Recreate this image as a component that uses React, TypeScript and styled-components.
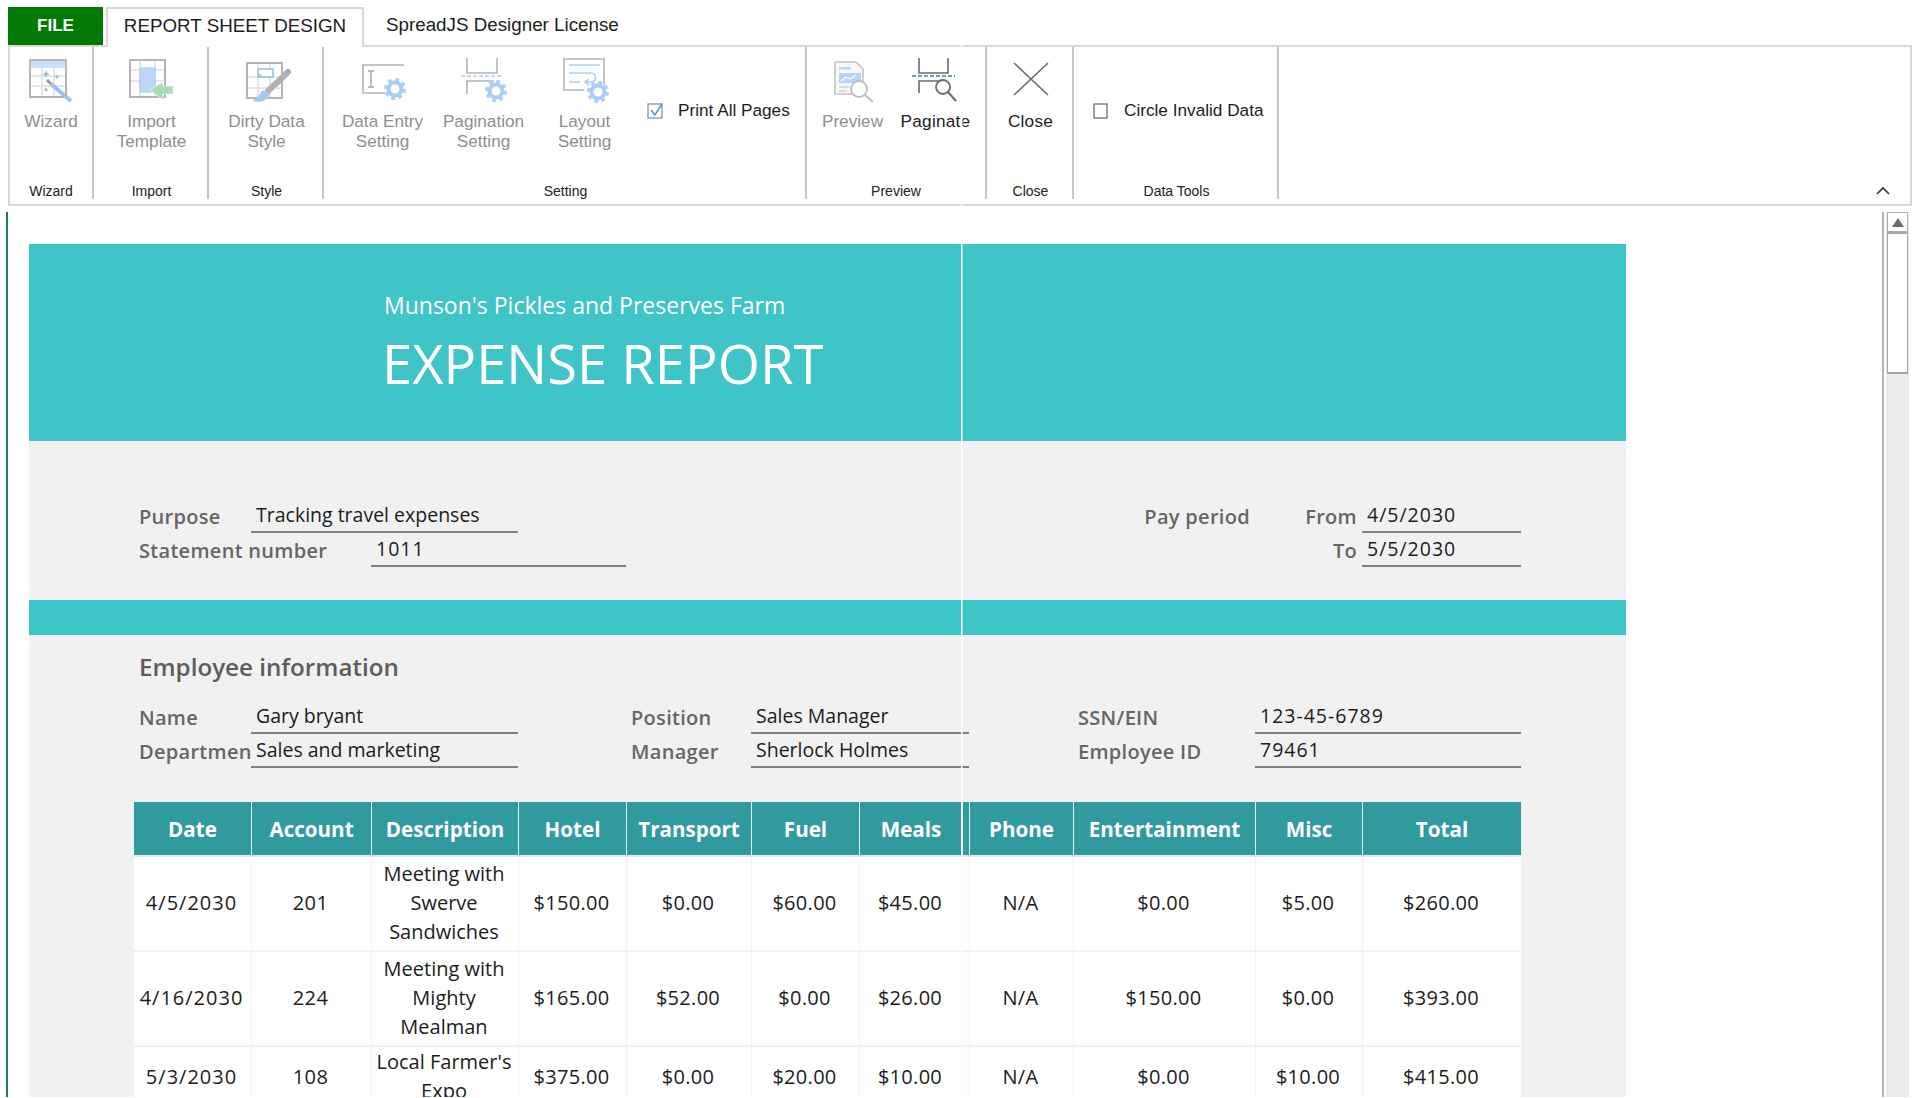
import React from "react";
import styled, { createGlobalStyle, css } from "styled-components";

const Global = createGlobalStyle`
     html, body {
          margin: 0;
          padding: 0;
          background: #fff;
          overflow: hidden;
     }
     * {
          box-sizing: border-box;
     }
`;

const GRAY = "#b5b5b5";
const BLUE = "#a9cdf5";
const sheetFont = `"Open Sans", "Noto Sans", sans-serif`;

const sheetColumns = css`
     display: grid;
     grid-template-columns: 117px 120px 147px 108px 125px 108px 103px 7px 104px 182px 107px 159px;
`;

const Gear: React.FC<{ x: number; y: number }> = ({ x, y }) => (
     <g fill="none" stroke={BLUE}>
          <circle cx={x} cy={y} r={6.5} strokeWidth={4} />
          <circle cx={x} cy={y} r={9.5} strokeWidth={3} strokeDasharray="3.7 3.76" />
     </g>
);

const Icon: React.FC<{ children: React.ReactNode }> = ({ children }) => (
     <S.IconSvg viewBox="0 0 50 46" width={50} height={46}>
          {children}
     </S.IconSvg>
);

const WizardIcon = () => (
     <Icon>
          <rect x={4} y={3} width={36} height={37} fill="#fff" stroke={GRAY} strokeWidth={2} />
          <rect x={5} y={4} width={34} height={7} fill="#c8e0fb" />
          <path d="M16 11V39M28 11V39M5 19H39M5 29H39" stroke="#dedede" strokeWidth={1.5} />
          <path d="M25 27L45 44" stroke="#9cc2ea" strokeWidth={4} />
          <path d="M21 23L25 27" stroke="#9a9a9a" strokeWidth={3} />
          <path
               d="M20 13l1 3 3 1-3 1-1 3-1-3-3-1 3-1zM31 17l.7 2 2 .7-2 .7-.7 2-.7-2-2-.7 2-.7zM20 30l2 4h-4z"
               fill="#8fb9e8"
          />
     </Icon>
);

const ImportIcon = () => (
     <Icon>
          <rect x={3} y={3} width={35} height={37} fill="#fff" stroke={GRAY} strokeWidth={2} />
          <path d="M13 4V39M28 4V39M4 13H37M4 24H37" stroke="#dedede" strokeWidth={1.5} />
          <rect x={13} y={11} width={15} height={24} fill="#bcd7f7" stroke="#a5c8f0" />
          <path d="M23 33L36 25V29H46V37H36V43Z" fill="#a8dcb9" stroke="#fff" strokeWidth={0.6} />
     </Icon>
);

const DirtyIcon = () => (
     <Icon>
          <rect x={5} y={6} width={35} height={35} fill="#fff" stroke={GRAY} strokeWidth={2} />
          <path d="M16 7V40M28 7V40M6 20H39M6 31H39" stroke="#e0e0e0" strokeWidth={1.5} />
          <rect x={16} y={12} width={15} height={8} fill="#fff" stroke="#8fbdec" strokeWidth={1.5} />
          <path d="M16 15L21 20H16Z" fill="#9ed4ad" />
          <path d="M46 15L26 34" stroke="#b0b0b0" strokeWidth={6} strokeLinecap="round" />
          <path d="M11 44C13 40 17 40 19 35C22 32 27 35 27 38C26 43 20 46 11 44Z" fill="#a6c9ef" />
     </Icon>
);

const DataEntryIcon = () => (
     <Icon>
          <path d="M46 8H5V36H27" fill="none" stroke={GRAY} strokeWidth={1.6} />
          <path d="M10 14H16M13 14V30M10 30H16" fill="none" stroke="#a8a8a8" strokeWidth={1.5} />
          <Gear x={37} y={32} />
     </Icon>
);

const PaginationIcon = () => (
     <Icon>
          <path d="M8 1V16H38V1M8 37V24H35" fill="none" stroke={GRAY} strokeWidth={1.6} />
          <path d="M2 19H44" stroke={BLUE} strokeWidth={1.5} strokeDasharray="4 2" />
          <Gear x={37} y={34} />
     </Icon>
);

const LayoutIcon = () => (
     <Icon>
          <path d="M44 28V2H4V33H24" fill="none" stroke={GRAY} strokeWidth={1.6} />
          <path
               d="M9 8H40M9 16H31C37 16 37 25 31 25H26M9 25H20M29 22L25 25L29 28"
               fill="none"
               stroke={BLUE}
               strokeWidth={1.5}
          />
          <Gear x={38} y={35} />
     </Icon>
);

const PreviewIcon = () => (
     <Icon>
          <path d="M7 5H28L35 12V28M25 37H7V5" fill="#f7f7f7" stroke="#c4c4c4" strokeWidth={1.6} />
          <rect x={11} y={10} width={12} height={2.5} fill="#bcd9f8" />
          <rect x={11} y={16} width={22} height={10} fill="#b5d3f5" />
          <path d="M13 24L18 20L22 22L28 18" fill="none" stroke="#fff" strokeWidth={1.2} />
          <path d="M11 30H21M11 34H19" stroke="#cfcfcf" strokeWidth={1.4} />
          <circle cx={31} cy={32} r={8} fill="#fff" stroke="#bdbdbd" strokeWidth={1.8} />
          <path d="M37 38L45 45" stroke="#bdbdbd" strokeWidth={2} />
     </Icon>
);

const PaginateIcon = () => (
     <Icon>
          <path d="M8 1V16H37V1M8 36V24H35" fill="none" stroke="#6b6b6b" strokeWidth={1.6} />
          <path d="M1 19H44" stroke="#2e7fd6" strokeWidth={1.6} strokeDasharray="4 2" />
          <circle cx={32} cy={30} r={7} fill="#fff" stroke="#6b6b6b" strokeWidth={1.8} />
          <path d="M37 35L45 44" stroke="#6b6b6b" strokeWidth={2} />
     </Icon>
);

const CloseIcon = () => (
     <Icon>
          <path d="M8 6L42 38M42 6L8 38" stroke="#6e6e6e" strokeWidth={1.6} />
     </Icon>
);

type RowData = {
     date: string;
     account: string;
     description: string[];
     values: (string | null)[];
     tight?: boolean;
};

const headers = [
     "Date",
     "Account",
     "Description",
     "Hotel",
     "Transport",
     "Fuel",
     "Meals",
     "",
     "Phone",
     "Entertainment",
     "Misc",
     "Total",
];

const rows: RowData[] = [
     {
          date: "4/5/2030",
          account: "201",
          description: ["Meeting with", "Swerve", "Sandwiches"],
          values: ["$150.00", "$0.00", "$60.00", "$45.00", null, "N/A", "$0.00", "$5.00", "$260.00"],
     },
     {
          date: "4/16/2030",
          account: "224",
          description: ["Meeting with", "Mighty", "Mealman"],
          values: ["$165.00", "$52.00", "$0.00", "$26.00", null, "N/A", "$150.00", "$0.00", "$393.00"],
     },
     {
          date: "5/3/2030",
          account: "108",
          description: ["Local Farmer's", "Expo"],
          values: ["$375.00", "$0.00", "$20.00", "$10.00", null, "N/A", "$0.00", "$10.00", "$415.00"],
          tight: true,
     },
];

const RibbonButton: React.FC<{ icon: React.ReactNode; lines: string[]; width: number; active?: boolean }> = (props) => (
     <S.Button $active={props.active} $width={props.width}>
          {props.icon}
          {props.lines.map((line) => (
               <span key={line}>{line}</span>
          ))}
     </S.Button>
);

export default function App() {
     return (
          <S.Frame>
               <Global />
               <S.TabBar>
                    <S.FileTab>FILE</S.FileTab>
                    <S.ActiveTab>REPORT SHEET DESIGN</S.ActiveTab>
                    <S.Tab>SpreadJS Designer License</S.Tab>
               </S.TabBar>

               <S.Ribbon>
                    <S.Group $width={84} $pad={0}>
                         <S.GroupBody>
                              <RibbonButton icon={<WizardIcon />} lines={["Wizard"]} width={80} />
                         </S.GroupBody>
                         <S.GroupLabel>Wizard</S.GroupLabel>
                    </S.Group>
                    <S.Group $width={115} $pad={2}>
                         <S.GroupBody>
                              <RibbonButton icon={<ImportIcon />} lines={["Import", "Template"]} width={101} />
                         </S.GroupBody>
                         <S.GroupLabel>Import</S.GroupLabel>
                    </S.Group>
                    <S.Group $width={115} $pad={2}>
                         <S.GroupBody>
                              <RibbonButton icon={<DirtyIcon />} lines={["Dirty Data", "Style"]} width={101} />
                         </S.GroupBody>
                         <S.GroupLabel>Style</S.GroupLabel>
                    </S.Group>
                    <S.Group $width={483} $pad={2}>
                         <S.GroupBody $inset={6}>
                              <RibbonButton icon={<DataEntryIcon />} lines={["Data Entry", "Setting"]} width={101} />
                              <RibbonButton icon={<PaginationIcon />} lines={["Pagination", "Setting"]} width={101} />
                              <RibbonButton icon={<LayoutIcon />} lines={["Layout", "Setting"]} width={101} />
                              <S.Check $gap={14} $inset={12}>
                                   <S.CheckBox viewBox="0 0 17 17" width={17} height={17}>
                                        <rect x={1} y={2} width={14} height={14} fill="#fff" stroke="#9a9a9a" strokeWidth={1.4} />
                                        <path d="M4 8L8 13L15 2" fill="none" stroke="#4a98e6" strokeWidth={1.6} />
                                   </S.CheckBox>
                                   Print All Pages
                              </S.Check>
                         </S.GroupBody>
                         <S.GroupLabel>Setting</S.GroupLabel>
                    </S.Group>
                    <S.Group $width={180} $pad={0}>
                         <S.GroupBody $inset={4}>
                              <RibbonButton icon={<PreviewIcon />} lines={["Preview"]} width={83} />
                              <RibbonButton icon={<PaginateIcon />} lines={["Paginate"]} width={83} active />
                         </S.GroupBody>
                         <S.GroupLabel>Preview</S.GroupLabel>
                    </S.Group>
                    <S.Group $width={87} $pad={2}>
                         <S.GroupBody>
                              <RibbonButton icon={<CloseIcon />} lines={["Close"]} width={83} active />
                         </S.GroupBody>
                         <S.GroupLabel>Close</S.GroupLabel>
                    </S.Group>
                    <S.Group $width={205} $pad={2}>
                         <S.GroupBody $inset={0}>
                              <S.Check $gap={16} $inset={17}>
                                   <S.CheckBox viewBox="0 0 15 17" width={15} height={17}>
                                        <rect x={1} y={2} width={13} height={14} fill="#fff" stroke="#777" strokeWidth={1.4} />
                                   </S.CheckBox>
                                   Circle Invalid Data
                              </S.Check>
                         </S.GroupBody>
                         <S.GroupLabel>Data Tools</S.GroupLabel>
                    </S.Group>
                    <S.Collapse viewBox="0 0 14 10" width={14} height={10}>
                         <path d="M1 8L7 2L13 8" fill="none" stroke="#333" strokeWidth={1.6} />
                    </S.Collapse>
               </S.Ribbon>

               <S.Workspace>
                    <S.SheetArea>
                         <S.Sheet>
                              <S.Banner>
                                   <S.Company>Munson's Pickles and Preserves Farm</S.Company>
                                   <S.ReportTitle>EXPENSE REPORT</S.ReportTitle>
                              </S.Banner>

                              <S.Section $top={58} $bottom={33}>
                                   <S.FormRow>
                                        <S.Label $col={1} $span={1}>Purpose</S.Label>
                                        <S.Value $col={2} $span={2}>Tracking travel expenses</S.Value>
                                        <S.Label $col={10} $span={1} $right>Pay period</S.Label>
                                        <S.Label $col={11} $span={1} $right>From</S.Label>
                                        <S.Value $col={12} $span={1} $spaced>4/5/2030</S.Value>
                                   </S.FormRow>
                                   <S.FormRow>
                                        <S.Label $col={1} $span={2}>Statement number</S.Label>
                                        <S.Value $col={3} $span={2} $spaced>1011</S.Value>
                                        <S.Label $col={11} $span={1} $right>To</S.Label>
                                        <S.Value $col={12} $span={1} $spaced>5/5/2030</S.Value>
                                   </S.FormRow>
                              </S.Section>

                              <S.Stripe />

                              <S.Section $top={0} $bottom={34}>
                                   <S.SectionTitle>Employee information</S.SectionTitle>
                                   <S.FormRow>
                                        <S.Label $col={1} $span={1}>Name</S.Label>
                                        <S.Value $col={2} $span={2}>Gary bryant</S.Value>
                                        <S.Label $col={5} $span={1}>Position</S.Label>
                                        <S.Value $col={6} $span={3}>Sales Manager</S.Value>
                                        <S.Label $col={10} $span={1}>SSN/EIN</S.Label>
                                        <S.Value $col={11} $span={2} $spaced>123-45-6789</S.Value>
                                   </S.FormRow>
                                   <S.FormRow>
                                        <S.Label $col={1} $span={1}>Department</S.Label>
                                        <S.Value $col={2} $span={2}>Sales and marketing</S.Value>
                                        <S.Label $col={5} $span={1}>Manager</S.Label>
                                        <S.Value $col={6} $span={3}>Sherlock Holmes</S.Value>
                                        <S.Label $col={10} $span={1}>Employee ID</S.Label>
                                        <S.Value $col={11} $span={2} $spaced>79461</S.Value>
                                   </S.FormRow>
                              </S.Section>

                              <S.TableWrap>
                                   <S.HeadRow>
                                        {headers.map((title, i) => (
                                             <S.HeadCell key={i}>{title}</S.HeadCell>
                                        ))}
                                   </S.HeadRow>
                                   {rows.map((row) => (
                                        <S.BodyRow key={row.date}>
                                             <S.Cell $spacing={1} $tight={row.tight}>{row.date}</S.Cell>
                                             <S.Cell $spacing={0.4} $tight={row.tight}>{row.account}</S.Cell>
                                             <S.Cell $spacing={0} $tight={row.tight}>
                                                  {row.description.map((line) => (
                                                       <div key={line}>{line}</div>
                                                  ))}
                                             </S.Cell>
                                             {row.values.map((value, i) => (
                                                  <S.Cell key={i} $spacing={0.3} $tight={row.tight}>{value}</S.Cell>
                                             ))}
                                        </S.BodyRow>
                                   ))}
                              </S.TableWrap>
                         </S.Sheet>
                    </S.SheetArea>
                    <S.ScrollBar>
                         <S.ScrollButton>
                              <svg viewBox="0 0 12 9" width={12} height={9}>
                                   <path d="M6 0L12 9H0Z" fill="#6a6a6a" />
                              </svg>
                         </S.ScrollButton>
                         <S.ScrollThumb />
                    </S.ScrollBar>
               </S.Workspace>

               <S.PageBreak />
          </S.Frame>
     );
}

const S = {
     Frame: styled.div`
          position: relative;
          width: 1920px;
          height: 1098px;
          overflow: hidden;
          font-family: "Liberation Sans", Arial, sans-serif;
          background: #fff;
     `,

     TabBar: styled.div`
          display: flex;
          align-items: stretch;
          height: 45px;
          padding: 7px 0 0 8px;
     `,
     FileTab: styled.div`
          width: 95px;
          margin-right: 3px;
          display: flex;
          align-items: center;
          justify-content: center;
          background: #037a03;
          color: #fff;
          font-size: 17px;
          font-weight: 700;
     `,
     ActiveTab: styled.div`
          width: 258px;
          height: 40px;
          padding-bottom: 5px;
          display: flex;
          align-items: center;
          justify-content: center;
          background: #fff;
          border: 2px solid #d8d8d8;
          border-bottom: 0;
          color: #1c1c1c;
          font-size: 18.8px;
          position: relative;
          z-index: 1;
     `,
     Tab: styled.div`
          padding: 0 0 2px 22px;
          display: flex;
          align-items: center;
          color: #1c1c1c;
          font-size: 18.8px;
     `,

     Ribbon: styled.div`
          display: flex;
          width: 1904px;
          height: 161px;
          margin-left: 8px;
          padding-bottom: 5px;
          border: 2px solid #d8d8d8;
     `,
     Group: styled.div<{ $width: number; $pad: number }>`
          width: ${(p) => p.$width}px;
          padding-left: ${(p) => p.$pad}px;
          display: flex;
          flex-direction: column;
          border-right: 2px solid #c3c7ce;
     `,
     GroupBody: styled.div<{ $inset?: number }>`
          flex: 1;
          display: flex;
          justify-content: ${(p) => (p.$inset === undefined ? "center" : "flex-start")};
          padding-left: ${(p) => p.$inset ?? 0}px;
     `,
     GroupLabel: styled.div`
          height: 16px;
          line-height: 16px;
          text-align: center;
          font-size: 14px;
          color: #222;
     `,
     Button: styled.div<{ $active?: boolean; $width: number }>`
          width: ${(p) => p.$width}px;
          flex: none;
          padding-top: 10px;
          display: flex;
          flex-direction: column;
          align-items: center;
          font-size: 17.2px;
          line-height: 20px;
          white-space: nowrap;
          letter-spacing: ${(p) => (p.$active ? "0.25px" : "0")};
          color: ${(p) => (p.$active ? "#1c1c1c" : "#8e8e8e")};
     `,
     IconSvg: styled.svg`
          display: block;
          flex: none;
          margin-bottom: 8px;
     `,
     Check: styled.div<{ $gap: number; $inset: number }>`
          display: flex;
          align-items: center;
          gap: ${(p) => p.$gap}px;
          height: 20px;
          margin: 53px 0 0 ${(p) => p.$inset}px;
          font-size: 17.2px;
          color: #1c1c1c;
          white-space: nowrap;
     `,
     CheckBox: styled.svg`
          display: block;
          flex: none;
     `,
     Collapse: styled.svg`
          align-self: flex-end;
          margin: 0 0 3px 597px;
     `,

     Workspace: styled.div`
          display: flex;
          height: 885px;
          margin: 6px 0 0 6px;
     `,
     SheetArea: styled.div`
          width: 1878px;
          padding: 32px 0 0 21px;
          overflow: hidden;
          border-left: 2px solid #1f7a5e;
          border-right: 2px solid #b4b4b4;
     `,
     Sheet: styled.div`
          width: 1597px;
          background: #f1f1f1;
          font-family: ${sheetFont};
          padding-bottom: 80px;
     `,
     Banner: styled.div`
          height: 197px;
          padding: 46px 0 0 355px;
          background: #3fc4c8;
          color: #fff;
     `,
     Company: styled.div`
          font-size: 23px;
          line-height: 30px;
     `,
     ReportTitle: styled.div`
          margin: 7px 0 0 -2px;
          font-size: 54.3px;
          line-height: 72px;
     `,
     Section: styled.div<{ $top: number; $bottom: number }>`
          padding: ${(p) => p.$top}px 0 ${(p) => p.$bottom}px 105px;
     `,
     Stripe: styled.div`
          height: 35px;
          background: #3fc4c8;
     `,
     SectionTitle: styled.div`
          height: 65px;
          display: flex;
          align-items: center;
          padding: 0 0 3px 5px;
          font-size: 24.2px;
          font-weight: 600;
          color: #5d5d5d;
     `,
     FormRow: styled.div`
          ${sheetColumns}
          height: 34px;
     `,
     Label: styled.div<{ $col: number; $span: number; $right?: boolean }>`
          grid-column: ${(p) => p.$col} / span ${(p) => p.$span};
          padding: 0 ${(p) => (p.$right ? "5px" : "0")} 0 ${(p) => (p.$right ? "0" : "5px")};
          line-height: 36px;
          overflow: hidden;
          white-space: nowrap;
          text-align: ${(p) => (p.$right ? "right" : "left")};
          font-size: 20px;
          letter-spacing: 0.3px;
          font-weight: 600;
          color: #666;
     `,
     Value: styled.div<{ $col: number; $span: number; $spaced?: boolean }>`
          grid-column: ${(p) => p.$col} / span ${(p) => p.$span};
          padding-left: 5px;
          line-height: 32px;
          border-bottom: 2px solid #808080;
          white-space: nowrap;
          font-size: 19.5px;
          letter-spacing: ${(p) => (p.$spaced ? "1px" : "0")};
          color: #1c1c1c;
     `,
     TableWrap: styled.div`
          margin-left: 105px;
          width: 1387px;
     `,
     HeadRow: styled.div`
          ${sheetColumns}
          height: 55px;
          background: #319a9f;
          border-bottom: 2px solid #e6e6e6;
     `,
     HeadCell: styled.div`
          display: flex;
          align-items: center;
          justify-content: center;
          border-left: 1px solid #e8f4f4;
          color: #fff;
          font-size: 20.6px;
          font-weight: 700;
          white-space: nowrap;
          &:first-child {
               border-left: 0;
          }
     `,
     BodyRow: styled.div`
          ${sheetColumns}
          background: #fff;
          border-bottom: 2px solid #f1f1f1;
     `,
     Cell: styled.div<{ $spacing: number; $tight?: boolean }>`
          display: flex;
          flex-direction: column;
          align-items: center;
          justify-content: center;
          padding: ${(p) => (p.$tight ? "0 2px 2px 0" : "2px 2px 4px 0")};
          border-left: 1px solid #f1f1f1;
          text-align: center;
          font-size: 20px;
          line-height: 29px;
          letter-spacing: ${(p) => p.$spacing}px;
          color: #1c1c1c;
          white-space: nowrap;
          &:first-child {
               border-left: 0;
          }
     `,

     ScrollBar: styled.div`
          width: 23px;
          margin-left: 2px;
          background: #ebebeb;
     `,
     ScrollButton: styled.div`
          width: 21px;
          height: 22px;
          margin-left: 1px;
          display: flex;
          align-items: center;
          justify-content: center;
          background: #fff;
          border: 1px solid #b0b0b0;
          border-bottom: 3px solid #aaa;
     `,
     ScrollThumb: styled.div`
          width: 21px;
          height: 140px;
          margin-left: 1px;
          background: #fff;
          border: 1px solid #a4a4a4;
          border-top: 0;
          border-bottom-width: 2px;
     `,

     PageBreak: styled.div`
          position: absolute;
          left: 961px;
          top: 45px;
          bottom: 0;
          width: 1px;
          background: #fff;
          box-shadow: 1px 0 0 rgba(255, 255, 255, 0.5);
          z-index: 5;
     `,
};
